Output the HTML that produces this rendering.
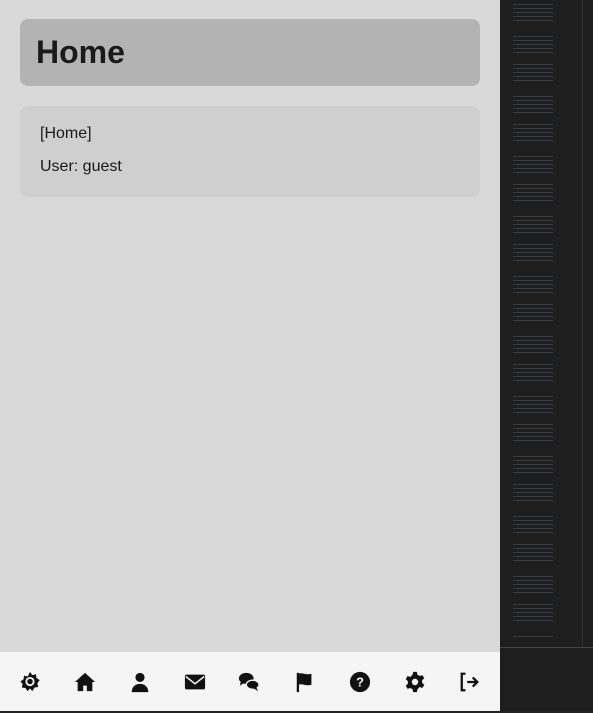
<!DOCTYPE html>
<html><head><style>
*{margin:0;padding:0;box-sizing:border-box}
body{width:593px;height:713px;background:#d9d9d9;font-family:"Liberation Sans",sans-serif;position:relative;overflow:hidden}
.hdr{position:absolute;left:20px;top:19px;width:460px;height:67px;background:#b3b3b3;border-radius:8px}
.hdr h1{position:absolute;left:16px;top:15px;font-size:32px;font-weight:bold;color:#1a1a1a}
.card{position:absolute;left:20px;top:106px;width:460px;height:91px;background:#cfcfcf;border-radius:8px;font-size:16px;color:#1a1a1a}
.card p{position:absolute;left:20px}
.nav{position:absolute;left:0;top:652px;width:500px;height:59px;background:#f5f5f5}
.bot{position:absolute;left:0;top:711px;width:593px;height:2px;background:#222}
.side{position:absolute;left:500px;top:0;width:93px;height:713px;background:#1e1e1e}
.code{position:absolute;left:513px;top:4px;width:40px;height:636px;
background:repeating-linear-gradient(to bottom,rgba(110,150,180,.45) 0 1px,transparent 1px 4px);
-webkit-mask:repeating-linear-gradient(to bottom,#000 0 20px,transparent 20px 30px);opacity:.6}
.vl{position:absolute;left:582px;top:0;width:1px;height:647px;background:#333}
.hl{position:absolute;left:500px;top:647px;width:93px;height:1px;background:#444}
.ic{position:absolute;top:671px;width:22px;height:22px}
</style></head><body>
<div class="hdr"><h1>Home</h1></div>
<div class="card"><p style="top:19px">[Home]</p><p style="top:52px">User: guest</p></div>
<div class="side"></div><div class="code"></div><div class="vl"></div><div class="hl"></div>
<div class="nav"></div>
<svg class="ic" style="left:19px" viewBox="0 0 24 24"><path fill="#111" d="M12 1l2.5 3.5 4-1 .5 4 3.5 2.5-2.5 3.5 1 4-4 .5L14.5 22 12 19l-2.5 3-2.5-3.5-4-.5 1-4L1.5 11.5 5 9l.5-4 4 1z"/><circle cx="12" cy="11.5" r="5" fill="#f5f5f5"/><circle cx="12" cy="11.5" r="3" fill="#111"/></svg>
<svg class="ic" style="left:74px" viewBox="0 0 24 24"><path fill="#111" d="M12 2L1 12h3v10h6v-6h4v6h6V12h3z"/></svg>
<svg class="ic" style="left:129px" viewBox="0 0 24 24"><circle cx="12" cy="7" r="5" fill="#111"/><path fill="#111" d="M3 23c0-6 4-9 9-9s9 3 9 9z"/></svg>
<svg class="ic" style="left:184px" viewBox="0 0 24 24"><rect x="1" y="4" width="22" height="16" rx="2" fill="#111"/><path d="M2 6l10 8 10-8" stroke="#f5f5f5" stroke-width="1.6" fill="none"/></svg>
<svg class="ic" style="left:238px" viewBox="0 0 24 24"><ellipse cx="9" cy="8" rx="8" ry="6" fill="#111"/><path fill="#111" d="M3 12l-1 4 5-3z"/><ellipse cx="16" cy="15" rx="7" ry="5" fill="#111" stroke="#f5f5f5" stroke-width="1.5"/><path fill="#111" d="M20 18l2 4-5-3z"/></svg>
<svg class="ic" style="left:294px" viewBox="0 0 24 24"><rect x="3" y="2" width="2.5" height="21" fill="#111"/><path fill="#111" d="M5 3c4-2 7 2 14 0v12c-7 2-10-2-14 0z"/></svg>
<svg class="ic" style="left:349px" viewBox="0 0 24 24"><circle cx="12" cy="12" r="11" fill="#111"/><text x="12" y="17" font-size="14" font-weight="bold" text-anchor="middle" fill="#f5f5f5" font-family="Liberation Sans">?</text></svg>
<svg class="ic" style="left:404px" viewBox="0 0 24 24"><path fill="#111" d="M10 1h4l.6 3 2.6 1.5 2.9-1 2 3.5-2.3 2v3l2.3 2-2 3.5-2.9-1L14.6 20 14 23h-4l-.6-3-2.6-1.5-2.9 1-2-3.5 2.3-2v-3l-2.3-2 2-3.5 2.9 1L9.4 4z"/><circle cx="12" cy="12" r="3.5" fill="#f5f5f5"/></svg>
<svg class="ic" style="left:459px" viewBox="0 0 24 24"><path d="M7 3H3v18h4" stroke="#111" stroke-width="2.5" fill="none"/><path d="M9 12h10M15 7l5 5-5 5" stroke="#111" stroke-width="2.5" fill="none"/></svg>
<div class="bot"></div>
</body></html>
